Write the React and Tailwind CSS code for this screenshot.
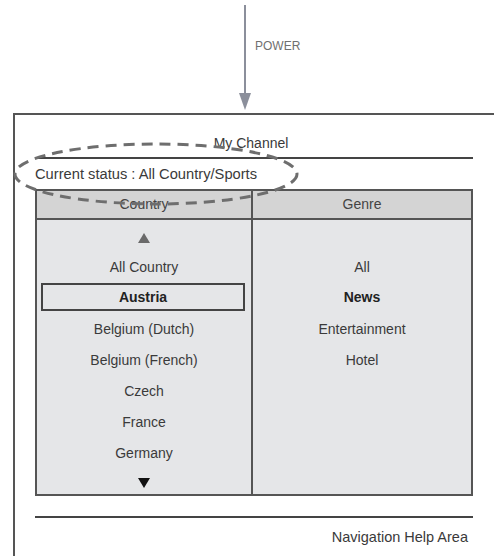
import React from "react";

const countries = [
  "All Country",
  "Austria",
  "Belgium (Dutch)",
  "Belgium (French)",
  "Czech",
  "France",
  "Germany",
];

const genres = ["All", "News", "Entertainment", "Hotel"];

const App = () => {
  return (
    <div className="relative w-[494px] h-[556px] overflow-hidden bg-white font-['Liberation_Sans',Arial,sans-serif] text-[#3a3a3a]">
      {/* power arrow */}
      <div className="h-[113px] flex items-start pl-[238px]">
        <svg width="14" height="112" viewBox="0 0 14 112">
          <line x1="7" y1="5" x2="7" y2="96" stroke="#8b8f9b" strokeWidth="2" />
          <polygon points="1,93 13,93 7,110" fill="#8b8f9b" />
        </svg>
        <span className="ml-[3px] mt-[37px] text-[12px] text-[#707070]">POWER</span>
      </div>

      {/* screen frame */}
      <div className="ml-[13px] h-[443px] border-t-2 border-l-2 border-[#555] pl-[20px] pr-[21px] flex flex-col">
        <div className="h-[44px] border-b-2 border-[#444] flex items-end justify-center pb-[3px] pr-[6px] text-[14px]">
          My Channel
        </div>
        <div className="h-[30px] flex items-center text-[14.7px]">
          Current status : All Country/Sports
        </div>

        {/* list table */}
        <div className="border-2 border-[#555] grid grid-cols-[216px_1fr] text-[14px]">
          <div className="h-[29px] bg-[#d4d4d4] border-r-2 border-b-2 border-[#555] flex items-center justify-center text-[#444]">
            Country
          </div>
          <div className="h-[29px] bg-[#d4d4d4] border-b-2 border-[#555] flex items-center justify-center text-[#444]">
            Genre
          </div>

          <div className="bg-[#e5e6e8] border-r-2 border-[#555] flex flex-col">
            <div className="h-[32px] flex items-center justify-center pt-[4px]">
              <svg width="12" height="10" viewBox="0 0 12 10">
                <polygon points="6,0 12,10 0,10" fill="#6a6a6a" />
              </svg>
            </div>
            {countries.map((c) =>
              c === "Austria" ? (
                <div key={c} className="h-[31px] pl-[4px] pr-[6px]">
                  <div className="h-[28px] border-2 border-[#444] flex items-center justify-center font-bold text-[#222]">
                    {c}
                  </div>
                </div>
              ) : (
                <div key={c} className="h-[31px] flex items-center justify-center">
                  {c}
                </div>
              )
            )}
            <div className="h-[25px] flex items-center justify-center pt-[3px]">
              <svg width="12" height="10" viewBox="0 0 12 10">
                <polygon points="0,0 12,0 6,10" fill="#111" />
              </svg>
            </div>
          </div>

          <div className="bg-[#e5e6e8] flex flex-col">
            <div className="h-[32px]" />
            {genres.map((g) => (
              <div
                key={g}
                className={
                  "h-[31px] flex items-center justify-center " +
                  (g === "News" ? "font-bold text-[#222] pb-[2px]" : "")
                }
              >
                {g}
              </div>
            ))}
          </div>
        </div>

        {/* help area */}
        <div className="mt-[20px] border-t-2 border-[#444] pt-[9px] pr-[5px] text-right text-[14.5px]">
          Navigation Help Area
        </div>
      </div>

      {/* highlight ellipse */}
      <svg
        className="absolute left-0 top-0 pointer-events-none"
        width="494"
        height="556"
        viewBox="0 0 494 556"
      >
        <ellipse
          cx="156"
          cy="174"
          rx="141"
          ry="30"
          fill="none"
          stroke="#6e6e6e"
          strokeWidth="3"
          strokeDasharray="11 7"
        />
      </svg>
    </div>
  );
};

export default App;
